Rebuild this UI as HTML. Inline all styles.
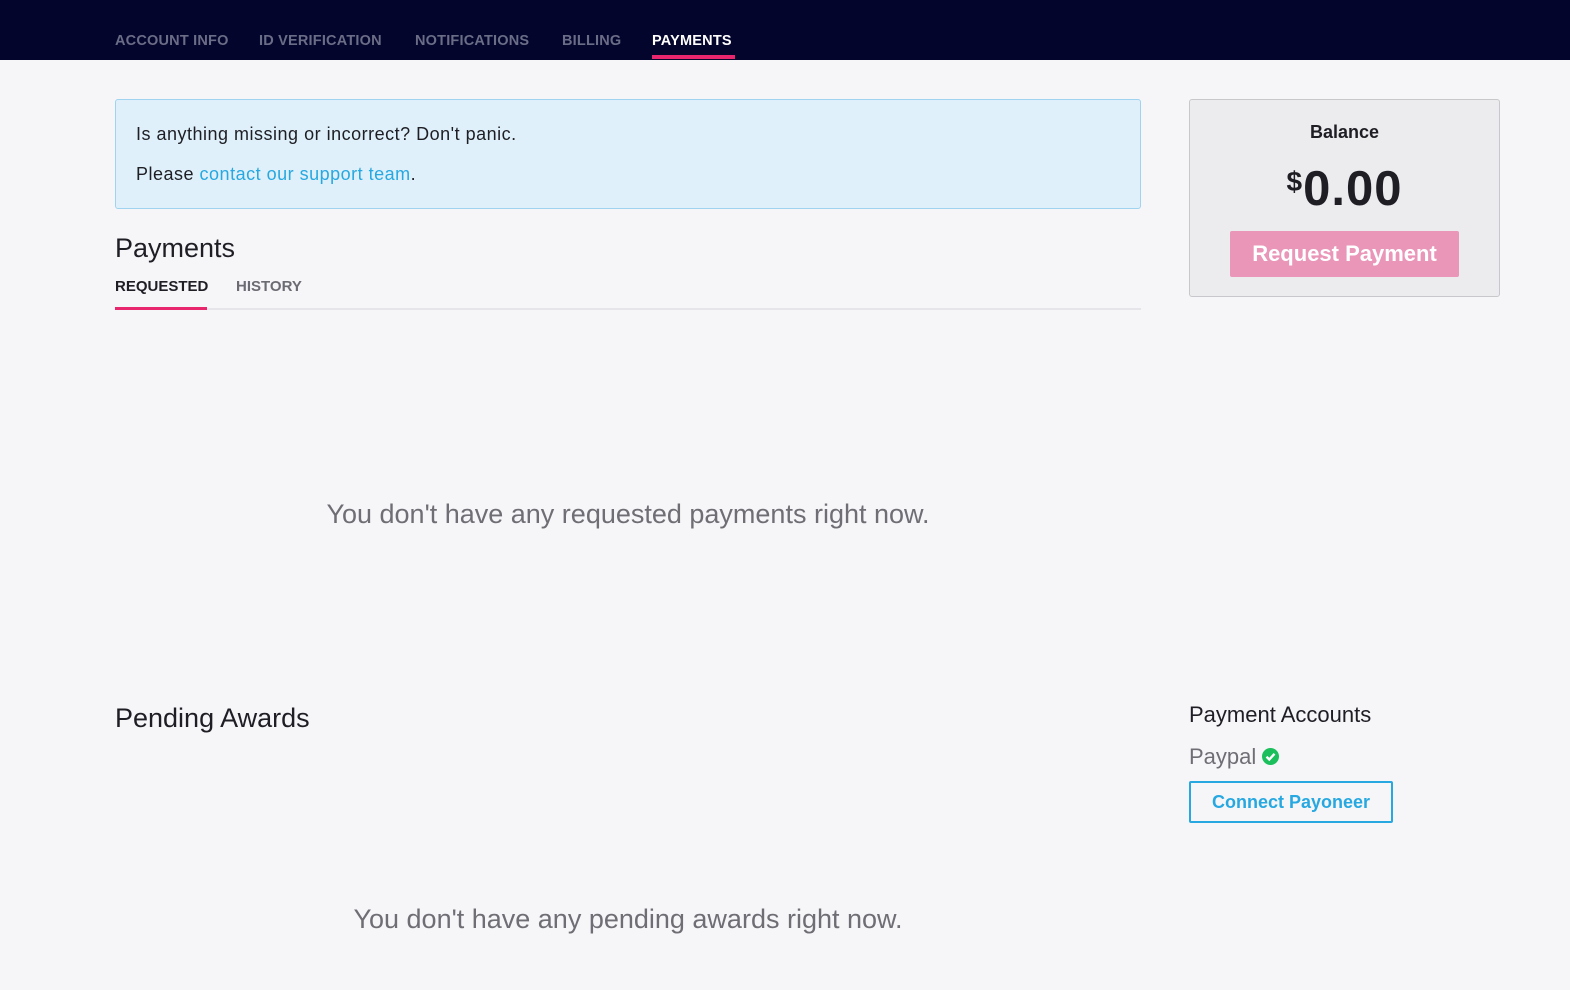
<!DOCTYPE html>
<html><head><meta charset="utf-8"><style>
*{margin:0;padding:0;box-sizing:border-box}
body{width:1570px;height:990px;background:#f6f6f9;font-family:"Liberation Sans",sans-serif;position:relative;overflow:hidden;color:#1e1e24}
.nav{position:absolute;left:0;top:0;width:1570px;height:60px;background:#03052d}
.nav span{position:absolute;top:33px;font-size:14.5px;font-weight:bold;color:#6b6d87;letter-spacing:0.2px}
.nav .act{color:#fff}
.nav .bar{position:absolute;left:652px;top:55px;width:83px;height:4px;background:#e8266d}
.alert{position:absolute;left:115px;top:99px;width:1026px;height:110px;background:#dff0fa;border:1px solid #9fd3ef;border-radius:3px}
.alert p{position:absolute;left:20px;font-size:18px;color:#1e1e24;letter-spacing:0.5px}
.alert a{color:#27a8e0;text-decoration:none}
.abs{position:absolute}
</style></head><body>
<div class="nav">
<span style="left:115px">ACCOUNT INFO</span>
<span style="left:259px">ID VERIFICATION</span>
<span style="left:415px">NOTIFICATIONS</span>
<span style="left:562px">BILLING</span>
<span class="act" style="left:652px">PAYMENTS</span>
<div class="bar"></div>
</div>
<div class="alert">
<p style="top:24px">Is anything missing or incorrect? Don't panic.</p>
<p style="top:64px">Please <a>contact our support team</a>.</p>
</div>
<div class="abs" style="left:115px;top:233px;font-size:27px">Payments</div>
<div class="abs" style="left:115px;top:278px;font-size:15px;font-weight:bold;color:#1e1e24">REQUESTED</div>
<div class="abs" style="left:236px;top:278px;font-size:15px;font-weight:bold;color:#6b6b73">HISTORY</div>
<div class="abs" style="left:115px;top:308px;width:1026px;height:2px;background:#e6e6ea"></div>
<div class="abs" style="left:115px;top:307px;width:92px;height:3px;background:#e8266d"></div>
<div class="abs" style="left:115px;top:499px;width:1026px;text-align:center;font-size:27px;color:#6e6e74">You don't have any requested payments right now.</div>
<div class="abs" style="left:115px;top:703px;font-size:27px">Pending Awards</div>
<div class="abs" style="left:115px;top:904px;width:1026px;text-align:center;font-size:27px;color:#6e6e74">You don't have any pending awards right now.</div>

<div class="abs" style="left:1189px;top:99px;width:311px;height:198px;background:#ececee;border:1px solid #c8c8cc;border-radius:3px">
<div class="abs" style="left:0;top:22px;width:100%;text-align:center;font-size:18px;font-weight:bold">Balance</div>
<div class="abs" style="left:0;top:61px;width:100%;text-align:center;font-size:49px;font-weight:bold;letter-spacing:1px"><span style="font-size:28px;vertical-align:14px">$</span>0.00</div>
<div class="abs" style="left:40px;top:131px;width:229px;height:46px;background:#e996b8;border-radius:2px;color:#fff;font-size:22px;font-weight:bold;text-align:center;line-height:46px">Request Payment</div>
</div>
<div class="abs" style="left:1189px;top:702px;font-size:22px">Payment Accounts</div>
<div class="abs" style="left:1189px;top:744px;font-size:22px;color:#6e6e74">Paypal</div>
<svg class="abs" style="left:1262px;top:748px" width="17" height="17" viewBox="0 0 17 17"><circle cx="8.5" cy="8.5" r="8.5" fill="#1bbf5c"/><path d="M4.5 8.8 L7.3 11.5 L12.5 5.8" stroke="#fff" stroke-width="2.4" fill="none"/></svg>
<div class="abs" style="left:1189px;top:781px;width:204px;height:42px;border:2px solid #27a8e0;border-radius:2px;color:#27a8e0;font-size:18px;font-weight:bold;text-align:center;line-height:38px">Connect Payoneer</div>
</body></html>
